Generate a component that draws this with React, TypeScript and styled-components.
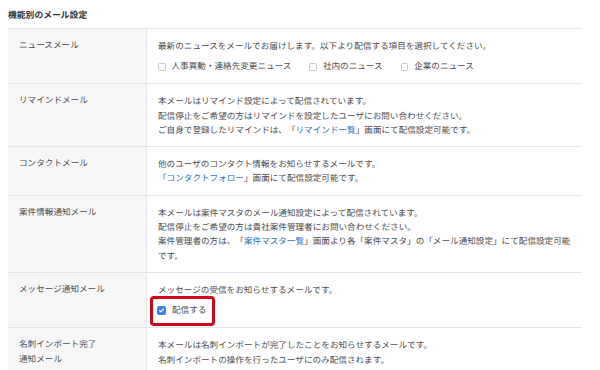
import React from "react";
import styled, { createGlobalStyle } from "styled-components";

const Global = createGlobalStyle`
  html, body { margin: 0; padding: 0; background: #ffffff; }
  body {
    font-family: "Noto Sans CJK JP", "Noto Sans", "Liberation Sans", sans-serif;
    color: #4d4d4d;
    text-rendering: geometricPrecision;
    text-spacing-trim: space-all;
    -webkit-font-smoothing: antialiased;
  }
`;

const Page = styled.div`
  width: 600px;
  height: 370px;
  overflow: hidden;
  padding: 8px 18px 0 8px;
  box-sizing: border-box;
`;

const Title = styled.h2`
  margin: 0;
  font-size: 8.8px;
  line-height: 14px;
  font-weight: 700;
  color: #333333;
  height: 20px;
`;

const Table = styled.div`
  display: grid;
  grid-template-columns: 139px 1fr;
  border-top: 1px solid #e6e6e6;
`;

const Label = styled.div`
  background: #f7f7f7;
  border-right: 1px solid #e6e6e6;
  border-bottom: 1px solid #e6e6e6;
  padding: 9px 8px 10px 11px;
  font-size: 8.6px;
  line-height: 14.3px;
  color: #4d4d4d;
`;

const Cell = styled.div`
  border-bottom: 1px solid #e6e6e6;
  padding: 10px 8px 9px 11px;
  font-size: 8.6px;
  line-height: 14.3px;
  color: #4d4d4d;
`;

const Line = styled.div`
  white-space: nowrap;
`;

const Link = styled.a`
  color: #2f6fbf;
  text-decoration: none;
`;

const Options = styled.div`
  display: flex;
  align-items: center;
  gap: 18px;
  margin-top: 6px;
  line-height: 15px;
`;

const Option = styled.label<{ $highlight?: boolean }>`
  position: relative;
  display: inline-flex;
  align-items: center;
  gap: 6px;
  white-space: nowrap;
  ${(p) =>
    p.$highlight &&
    `
    &::after {
      content: "";
      position: absolute;
      left: -8px;
      right: -9px;
      top: -7px;
      bottom: -8px;
      border: 3px solid #d0051c;
      border-radius: 4px;
      pointer-events: none;
    }
  `}
`;

const Box = styled.span<{ $checked?: boolean }>`
  box-sizing: border-box;
  display: inline-flex;
  align-items: center;
  justify-content: center;
  width: ${(p) => (p.$checked ? "9px" : "7.5px")};
  height: ${(p) => (p.$checked ? "9px" : "7.5px")};
  border-radius: ${(p) => (p.$checked ? "2px" : "1.5px")};
  border: ${(p) => (p.$checked ? "none" : "1px solid #c8c8c8")};
  background: ${(p) => (p.$checked ? "#3d82ef" : "#ffffff")};
  margin-left: ${(p) => (p.$checked ? "-1px" : "0")};
`;

const Checkbox = ({ checked }: { checked?: boolean }) => (
  <Box $checked={checked}>
    {checked && (
      <svg width="7" height="7" viewBox="0 0 10 10">
        <path d="M2.3 5.2 L4.2 7.1 L7.8 3" fill="none" stroke="#fff" strokeWidth="1.6" strokeLinecap="round" strokeLinejoin="round" />
      </svg>
    )}
  </Box>
);

export default function App() {
  return (
    <Page>
      <Global />
      <Title>機能別のメール設定</Title>
      <Table>
        <Label>ニュースメール</Label>
        <Cell>
          <Line>最新のニュースをメールでお届けします。以下より配信する項目を選択してください。</Line>
          <Options>
            <Option><Checkbox />人事異動・連絡先変更ニュース</Option>
            <Option><Checkbox />社内のニュース</Option>
            <Option><Checkbox />企業のニュース</Option>
          </Options>
        </Cell>

        <Label>リマインドメール</Label>
        <Cell>
          <Line>本メールはリマインド設定によって配信されています。</Line>
          <Line>配信停止をご希望の方はリマインドを設定したユーザにお問い合わせください。</Line>
          <Line>ご自身で登録したリマインドは、「<Link>リマインド一覧</Link>」画面にて配信設定可能です。</Line>
        </Cell>

        <Label>コンタクトメール</Label>
        <Cell>
          <Line>他のユーザのコンタクト情報をお知らせするメールです。</Line>
          <Line>「<Link>コンタクトフォロー</Link>」画面にて配信設定可能です。</Line>
        </Cell>

        <Label>案件情報通知メール</Label>
        <Cell>
          <Line>本メールは案件マスタのメール通知設定によって配信されています。</Line>
          <Line>配信停止をご希望の方は貴社案件管理者にお問い合わせください。</Line>
          <Line>案件管理者の方は、「<Link>案件マスタ一覧</Link>」画面より各「案件マスタ」の「メール通知設定」にて配信設定可能</Line>
          <Line>です。</Line>
        </Cell>

        <Label>メッセージ通知メール</Label>
        <Cell>
          <Line>メッセージの受信をお知らせするメールです。</Line>
          <Options>
            <Option $highlight><Checkbox checked />配信する</Option>
          </Options>
        </Cell>

        <Label>名刺インポート完了<br />通知メール</Label>
        <Cell>
          <Line>本メールは名刺インポートが完了したことをお知らせするメールです。</Line>
          <Line>名刺インポートの操作を行ったユーザにのみ配信されます。</Line>
        </Cell>
      </Table>
    </Page>
  );
}
